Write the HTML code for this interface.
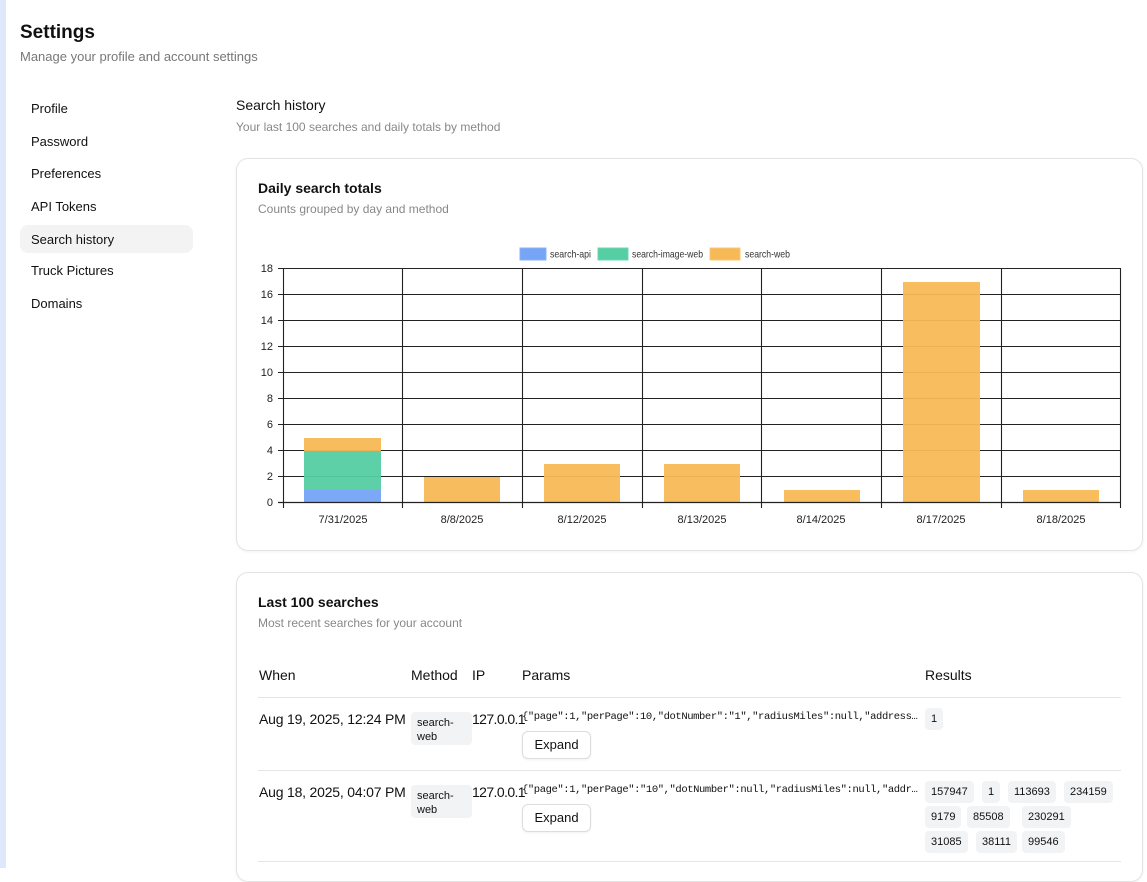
<!DOCTYPE html>
<html><head><meta charset="utf-8"><style>
*{box-sizing:border-box;margin:0;padding:0}
body{width:1147px;height:868px;overflow:hidden;background:#fff;font-family:"Liberation Sans",sans-serif;color:#111;position:relative}
.strip{position:absolute;left:0;top:0;width:6px;height:868px;background:#dfe8fb}
.abs{position:absolute;white-space:nowrap}
.nav{position:absolute;left:20px;width:173px;height:28px;border-radius:8px;font-size:13px;padding:7px 11px;color:#111}
.card{position:absolute;left:236px;width:907px;border:1px solid #e3e3e3;border-radius:12px;box-shadow:0 1px 3px rgba(0,0,0,.05)}
.pill{position:absolute;background:#f2f3f5;border-radius:4px;font-size:11px;padding:4px 6px;line-height:14px}
.btn{position:absolute;border:1px solid #ddd;border-radius:6px;background:#fff;font-size:13px;width:69px;height:28px;text-align:center;line-height:26px;box-shadow:0 1px 2px rgba(0,0,0,.06)}
.mono{font-family:"Liberation Mono",monospace;font-size:10.5px;letter-spacing:-0.4px}
.hr{position:absolute;left:258px;width:863px;height:1px;background:#e5e5e5}
</style></head><body>
<div class="strip"></div>
<div class="abs" style="left:20px;top:22px;font-size:19px;font-weight:bold">Settings</div>
<div class="abs" style="left:20px;top:49px;font-size:13px;color:#777">Manage your profile and account settings</div>
<div class="nav" style="top:94px">Profile</div>
<div class="nav" style="top:127px">Password</div>
<div class="nav" style="top:159px">Preferences</div>
<div class="nav" style="top:192px">API Tokens</div>
<div class="nav" style="top:225px;background:#f3f3f4">Search history</div>
<div class="nav" style="top:256px">Truck Pictures</div>
<div class="nav" style="top:289px">Domains</div>

<div class="abs" style="left:236px;top:97px;font-size:14px">Search history</div>
<div class="abs" style="left:236px;top:120px;font-size:12px;color:#888">Your last 100 searches and daily totals by method</div>

<div class="card" style="top:158px;height:393px"></div>
<div class="abs" style="left:258px;top:180px;font-size:14px;font-weight:bold">Daily search totals</div>
<div class="abs" style="left:258px;top:202px;font-size:12px;color:#888">Counts grouped by day and method</div>
<svg class="abs" style="left:0;top:0" width="1147" height="560" font-family="Liberation Sans, sans-serif" font-size="11">
<rect x="520" y="248" width="26" height="12" fill="#76a5f7" stroke="#8ab0f5"/>
<rect x="598" y="248" width="30" height="12" fill="#55cea4" stroke="#6fd6b0"/>
<rect x="710" y="248" width="30" height="12" fill="#f7b955" stroke="#f9c877"/>
<text x="550" y="257.5" fill="#333" font-size="10.5" textLength="41" lengthAdjust="spacingAndGlyphs">search-api</text>
<text x="632" y="257.5" fill="#333" font-size="10.5" textLength="71" lengthAdjust="spacingAndGlyphs">search-image-web</text>
<text x="745" y="257.5" fill="#333" font-size="10.5" textLength="45" lengthAdjust="spacingAndGlyphs">search-web</text>
<g stroke="#222" stroke-width="1.1">
<line x1="278" y1="268.5" x2="1120" y2="268.5"/><line x1="278" y1="294.5" x2="1120" y2="294.5"/><line x1="278" y1="320.5" x2="1120" y2="320.5"/><line x1="278" y1="346.5" x2="1120" y2="346.5"/><line x1="278" y1="372.5" x2="1120" y2="372.5"/><line x1="278" y1="398.5" x2="1120" y2="398.5"/><line x1="278" y1="424.5" x2="1120" y2="424.5"/><line x1="278" y1="450.5" x2="1120" y2="450.5"/><line x1="278" y1="476.5" x2="1120" y2="476.5"/>
<line x1="283.5" y1="268" x2="283.5" y2="508"/><line x1="402.5" y1="268" x2="402.5" y2="508"/><line x1="522.5" y1="268" x2="522.5" y2="508"/><line x1="642.5" y1="268" x2="642.5" y2="508"/><line x1="761.5" y1="268" x2="761.5" y2="508"/><line x1="881.5" y1="268" x2="881.5" y2="508"/><line x1="1001.5" y1="268" x2="1001.5" y2="508"/><line x1="1120.5" y1="268" x2="1120.5" y2="508"/>
</g>
<g opacity="0.95">
<rect x="304" y="490" width="77" height="13" fill="#76a5f7"/>
<rect x="304" y="451" width="77" height="39" fill="#55cea4"/>
<rect x="304" y="438" width="77" height="13" fill="#f7b955"/>
<rect x="424" y="477" width="76" height="26" fill="#f7b955"/>
<rect x="544" y="464" width="76" height="39" fill="#f7b955"/>
<rect x="664" y="464" width="76" height="39" fill="#f7b955"/>
<rect x="784" y="490" width="76" height="13" fill="#f7b955"/>
<rect x="903" y="282" width="77" height="221" fill="#f7b955"/>
<rect x="1023" y="490" width="76" height="13" fill="#f7b955"/>
</g>
<line x1="278" y1="502.5" x2="1120" y2="502.5" stroke="#222" stroke-width="1.2"/>
<g fill="#222" text-anchor="end">
<text x="273" y="272">18</text><text x="273" y="298">16</text><text x="273" y="324">14</text><text x="273" y="350">12</text><text x="273" y="376">10</text><text x="273" y="402">8</text><text x="273" y="428">6</text><text x="273" y="454">4</text><text x="273" y="480">2</text><text x="273" y="506">0</text>
</g>
<g fill="#222" text-anchor="middle">
<text x="343" y="523">7/31/2025</text><text x="462" y="523">8/8/2025</text><text x="582" y="523">8/12/2025</text><text x="702" y="523">8/13/2025</text><text x="821" y="523">8/14/2025</text><text x="941" y="523">8/17/2025</text><text x="1061" y="523">8/18/2025</text>
</g>
</svg>

<div class="card" style="top:572px;height:310px"></div>
<div class="abs" style="left:258px;top:594px;font-size:14px;font-weight:bold">Last 100 searches</div>
<div class="abs" style="left:258px;top:616px;font-size:12px;color:#888">Most recent searches for your account</div>
<div class="abs" style="left:259px;top:667px;font-size:14px">When</div>
<div class="abs" style="left:411px;top:667px;font-size:14px">Method</div>
<div class="abs" style="left:472px;top:667px;font-size:14px">IP</div>
<div class="abs" style="left:522px;top:667px;font-size:14px">Params</div>
<div class="abs" style="left:925px;top:667px;font-size:14px">Results</div>
<div class="hr" style="top:697px"></div>

<div class="abs" style="left:259px;top:711px;font-size:14px;letter-spacing:-0.2px">Aug 19, 2025, 12:24 PM</div>
<div class="pill" style="left:411px;top:712px;width:61px;height:33px">search-<br>web</div>
<div class="abs" style="left:472px;top:711px;font-size:14px;letter-spacing:-0.6px">127.0.0.1</div>
<div class="abs mono" style="left:522px;top:711px">{"page":1,"perPage":10,"dotNumber":"1","radiusMiles":null,"address…</div>
<div class="btn" style="left:522px;top:731px">Expand</div>
<div class="pill" style="left:925px;top:708px">1</div>
<div class="hr" style="top:770px"></div>

<div class="abs" style="left:259px;top:784px;font-size:14px;letter-spacing:-0.2px">Aug 18, 2025, 04:07 PM</div>
<div class="pill" style="left:411px;top:785px;width:61px;height:33px">search-<br>web</div>
<div class="abs" style="left:472px;top:784px;font-size:14px;letter-spacing:-0.6px">127.0.0.1</div>
<div class="abs mono" style="left:522px;top:784px">{"page":1,"perPage":"10","dotNumber":null,"radiusMiles":null,"addr…</div>
<div class="btn" style="left:522px;top:804px">Expand</div>
<div class="pill" style="left:925px;top:781px">157947</div>
<div class="pill" style="left:982px;top:781px">1</div>
<div class="pill" style="left:1008px;top:781px">113693</div>
<div class="pill" style="left:1064px;top:781px">234159</div>
<div class="pill" style="left:925px;top:806px">9179</div>
<div class="pill" style="left:967px;top:806px">85508</div>
<div class="pill" style="left:1022px;top:806px">230291</div>
<div class="pill" style="left:925px;top:831px">31085</div>
<div class="pill" style="left:976px;top:831px">38111</div>
<div class="pill" style="left:1022px;top:831px">99546</div>
<div class="hr" style="top:861px"></div>
</body></html>
